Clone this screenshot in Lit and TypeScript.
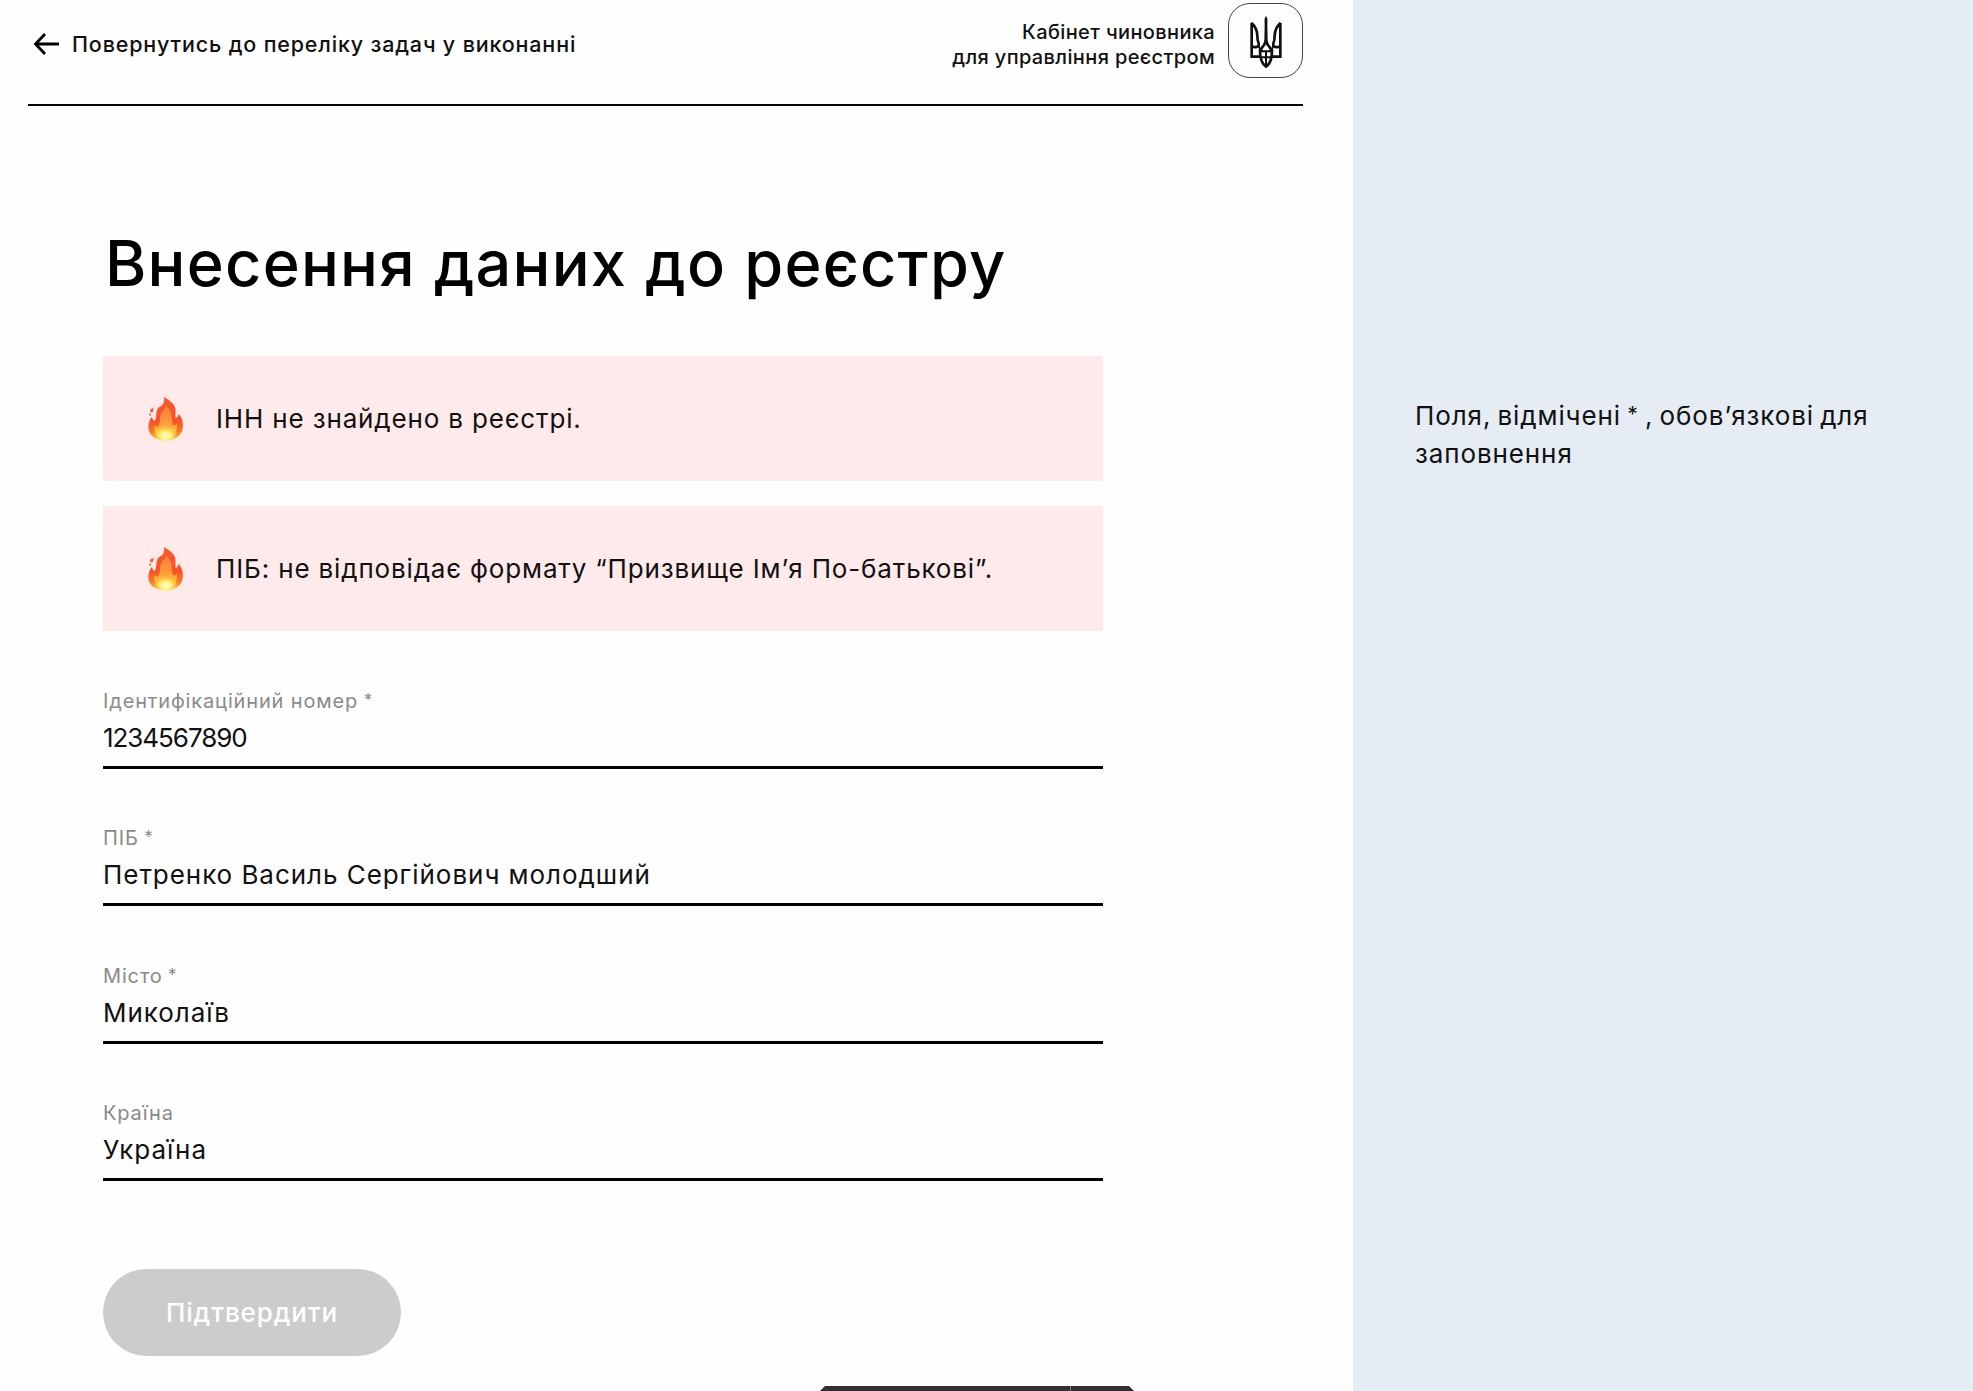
import { LitElement, html, css, svg } from "lit";
import { customElement, property } from "lit/decorators.js";

@customElement("flame-icon")
class FlameIcon extends LitElement {
  static styles = css`
    :host { display: block; width: 35px; height: 45px; flex: none; }
    svg { display: block; width: 100%; height: 100%; }
  `;
  render() {
    return html`<svg viewBox="40 49 105 135">
      <defs>
        <linearGradient id="outer" x1="0" y1="0" x2="0" y2="1">
          <stop offset="0" stop-color="#fb5a2c" />
          <stop offset="0.55" stop-color="#f9502a" />
          <stop offset="0.8" stop-color="#fb7a22" />
          <stop offset="1" stop-color="#fdc52e" />
        </linearGradient>
        <linearGradient id="mid" x1="0" y1="0" x2="0" y2="1">
          <stop offset="0" stop-color="#fd7a3a" />
          <stop offset="0.5" stop-color="#fd9c3c" />
          <stop offset="1" stop-color="#ffd83a" />
        </linearGradient>
        <radialGradient id="core" cx="0.5" cy="0.72" r="0.55">
          <stop offset="0" stop-color="#fffde0" />
          <stop offset="0.4" stop-color="#fff27a" />
          <stop offset="1" stop-color="#ffc62e" stop-opacity="0" />
        </radialGradient>
      </defs>
      <path fill="url(#outer)" d="M88 52C97 58 118 68 122 86C124 96 121 106 123 114C128 114 131 108 132 102C140 111 145 124 145 138C145 164 124 182 93 182C62 182 41 166 41 143C41 131 45 119 52 111C53 117 55 122 60 124C67 116 63 104 67 92C70 82 78 80 83 76C89 70 89 61 88 52Z" />
      <path fill="url(#mid)" d="M92 78C101 82 108 90 110 102C112 116 112 128 115 137C120 137 124 136 127 132C130 154 116 179 93 179C70 179 56 162 59 136C62 141 67 142 72 139C78 126 74 112 79 102C83 93 91 90 92 78Z" />
      <ellipse fill="url(#core)" cx="93" cy="156" rx="36" ry="28" />
      <path fill="#f9603c" d="M55 83C58 90 57 96 51 99C46 97 44 92 48 89C51 87 54 87 55 83ZM46 101C51 102 50 108 46 109C42 107 43 103 46 101Z" />
    </svg>`;
  }
}

@customElement("alert-box")
class AlertBox extends LitElement {
  @property() text = "";
  static styles = css`
    :host { display: flex; align-items: center; height: 125px; padding: 0 45px; box-sizing: border-box; background: #ffeaeb; }
    .text { margin-left: 33px; font-size: 26px; line-height: 38px; letter-spacing: 0.85px; white-space: nowrap; color: #111; }
  `;
  render() {
    return html`<flame-icon></flame-icon><span class="text">${this.text}</span>`;
  }
}

@customElement("form-field")
class FormField extends LitElement {
  @property() label = "";
  @property() value = "";
  @property({ type: Boolean }) required = false;
  static styles = css`
    :host { display: flex; flex-direction: column; height: 84px; box-sizing: border-box; border-bottom: 3px solid #000; padding-top: 2px; }
    .label { font-size: 20px; line-height: 28px; letter-spacing: 0.85px; color: #8a8a8a; }
    .star { font-size: 17px; line-height: 1; margin-left: -1px; vertical-align: 2px; }
    .value { margin-top: 5px; font-size: 26px; line-height: 36px; letter-spacing: 0.95px; color: #111; }
    .digits { letter-spacing: -1.05px; }
  `;
  render() {
    const digits = /^\d+$/.test(this.value) ? "digits" : "";
    return html`<span class="label">${this.label}${this.required ? html` <span class="star">*</span>` : ""}</span><span class="value ${digits}">${this.value}</span>`;
  }
}

const trident = svg`
  <g fill="none" stroke="#111" stroke-width="8" stroke-linejoin="miter">
    <path d="M107 68V169H134M193 68V169H166" />
    <path d="M106 67C118 78 124 92 124 106C124 117 125 123 128 129C130 136 124 142 114 140L106 138" />
    <path d="M194 67C182 78 176 92 176 106C176 117 175 123 172 129C170 136 176 142 186 140L194 138" />
    <path d="M150 120C147 134 140 140 132 150C132 174 138 192 150 199C162 192 168 174 168 150C160 140 153 134 150 120Z" />
    <path d="M134 153H166M134 171H166M150 150V199" stroke-width="6" />
    <path d="M128 134C129 143 132 149 139 152M172 134C171 143 168 149 161 152" stroke-width="6" />
  </g>
  <path fill="#111" d="M150 47C156 53 154 62 154 72L155 124L150 136L145 124L146 72C146 62 144 53 150 47Z" />
`;

@customElement("app-root")
class AppRoot extends LitElement {
  static styles = css`
    :host { display: block; height: 1391px; overflow: hidden; background: #fefefe; font-family: Inter, "Noto Sans", sans-serif; color: #111; }
    .page { position: relative; display: grid; grid-template-columns: 1353px 1fr; height: 100%; }
    .main { padding: 0 50px 0 28px; }
    .header { display: flex; justify-content: space-between; height: 106px; box-sizing: border-box; border-bottom: 2px solid #050505; padding-top: 3px; }
    .back { display: flex; align-items: center; height: 82px; gap: 13px; padding-left: 5px; font-size: 21.5px; letter-spacing: 0.83px; white-space: nowrap; font-weight: 450; }
    .arrow { width: 26px; height: 24px; display: block; }
    .brand { display: flex; gap: 13px; height: 75px; }
    .name { margin-top: 17px; text-align: right; font-size: 20px; line-height: 25px; white-space: nowrap; letter-spacing: 0.37px; font-weight: 500; }
    .logo { display: flex; align-items: center; justify-content: center; width: 75px; height: 75px; box-sizing: border-box; border: 1.5px solid #444; border-radius: 22px; }
    .logo svg { width: 32px; height: 52px; display: block; margin-top: 2px; }
    .content { width: 1000px; margin-left: 75px; }
    .title { margin: 117px 0 0 2px; height: 133px; font-size: 63px; line-height: 80px; font-weight: 500; letter-spacing: 1.25px; white-space: nowrap; color: #000; }
    .alerts { display: grid; gap: 25px; }
    .form { margin-top: 54px; display: grid; gap: 53.4px; }
    .submit { display: block; margin-top: 88px; width: 298px; height: 87px; border: 0; border-radius: 44px; background: #ccc; color: #fff; font: 500 26px/38px Inter, sans-serif; letter-spacing: 0.9px; padding: 0; }
    .aside { background: #e5ecf4; padding: 397px 0 0 62px; font-size: 26px; line-height: 37.5px; letter-spacing: 0.9px; word-spacing: -2px; white-space: nowrap; }
    .star { font-size: 21px; line-height: 1; vertical-align: 3px; }
    .toast { position: absolute; left: 820px; bottom: 0; width: 314px; height: 5px; display: flex; background: #303031; clip-path: polygon(5px 0, 309px 0, 100% 100%, 0 100%); }
    .divider { margin-left: 250px; width: 1px; background: #777; }
  `;
  render() {
    return html`<div class="page">
      <main class="main">
        <header class="header">
          <a class="back">
            <svg class="arrow" viewBox="0 0 26 24" fill="none" stroke="#000" stroke-width="2.8"><path d="M26 12H3M12 2L2.5 12L12 22" /></svg>
            <span>Повернутись до переліку задач у виконанні</span>
          </a>
          <div class="brand">
            <div class="name">Кабінет чиновника<br />для управління реєстром</div>
            <div class="logo"><svg viewBox="103 47 94 156">${trident}</svg></div>
          </div>
        </header>
        <section class="content">
          <h1 class="title">Внесення даних до реєстру</h1>
          <div class="alerts">
            <alert-box text="ІНН не знайдено в реєстрі."></alert-box>
            <alert-box text="ПІБ: не відповідає формату “Призвище Ім’я По-батькові”."></alert-box>
          </div>
          <div class="form">
            <form-field required label="Ідентифікаційний номер" value="1234567890"></form-field>
            <form-field required label="ПІБ" value="Петренко Василь Сергійович молодший"></form-field>
            <form-field required label="Місто" value="Миколаїв"></form-field>
            <form-field label="Країна" value="Україна"></form-field>
          </div>
          <button class="submit" disabled>Підтвердити</button>
        </section>
      </main>
      <aside class="aside">Поля, відмічені <span class="star">*</span> , обов’язкові для<br />заповнення</aside>
      <div class="toast"><div class="divider"></div></div>
    </div>`;
  }
}
